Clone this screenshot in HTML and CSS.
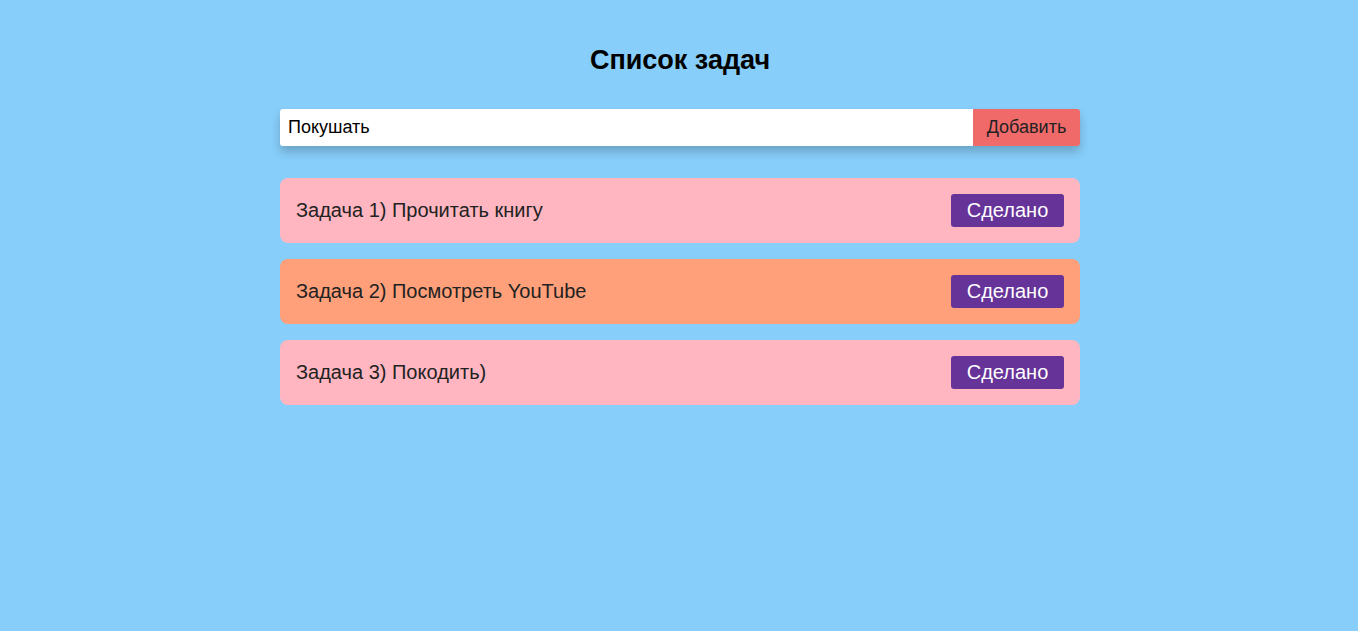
FILE: index.html
```html
<!DOCTYPE html>
<html lang="ru">
<head>
<meta charset="utf-8">
<title>Список задач</title>
<link rel="stylesheet" href="styles.css">
</head>
<body>
<div class="app">
  <h1 class="title">Список задач</h1>
  <form class="add-form">
    <input class="add-input" type="text" value="Покушать">
    <button class="add-btn" type="button">Добавить</button>
  </form>
  <ul class="tasks">
    <li class="task task-pink"><span class="task-text">Задача 1) Прочитать книгу</span><button class="done-btn" type="button">Сделано</button></li>
    <li class="task task-orange"><span class="task-text">Задача 2) Посмотреть YouTube</span><button class="done-btn" type="button">Сделано</button></li>
    <li class="task task-pink"><span class="task-text">Задача 3) Покодить)</span><button class="done-btn" type="button">Сделано</button></li>
  </ul>
</div>
</body>
</html>
```

FILE: styles.css
```css
html, body {
  margin: 0;
  padding: 0;
}
body {
  background: #87cefa;
  font-family: "Liberation Sans", Arial, sans-serif;
  min-height: 631px;
  padding-left: 2px;
}
.app {
  width: 800px;
  margin: 0 auto;
  padding-top: 45px;
}
.title {
  margin: 0 0 34px;
  font-size: 27px;
  line-height: 30px;
  text-align: center;
  color: #000;
}
.add-form {
  display: flex;
  height: 37px;
  border-radius: 3px;
  box-shadow: 0 6px 10px rgba(0, 0, 0, 0.2);
  margin: 0 0 32px;
}
.add-input {
  flex: 1;
  border: none;
  outline: none;
  margin: 0;
  padding: 0 8px;
  font-family: "Liberation Sans", Arial, sans-serif;
  font-size: 18px;
  color: #000;
  background: #fff;
  border-radius: 3px 0 0 3px;
}
.add-btn {
  width: 107px;
  border: none;
  margin: 0;
  padding: 0;
  background: #f06a6a;
  color: #222;
  font-family: "Liberation Sans", Arial, sans-serif;
  font-size: 18px;
  border-radius: 0 3px 3px 0;
}
.tasks {
  list-style: none;
  margin: 0;
  padding: 0;
  display: flex;
  flex-direction: column;
  gap: 16px;
}
.task {
  display: flex;
  align-items: center;
  justify-content: space-between;
  height: 65px;
  padding: 0 16px;
  border-radius: 8px;
  box-sizing: border-box;
}
.task-pink {
  background: #ffb6c1;
}
.task-orange {
  background: #ffa07a;
}
.task-text {
  font-size: 20px;
  color: #222;
}
.done-btn {
  width: 113px;
  height: 33px;
  border: none;
  border-radius: 3px;
  background: #663399;
  color: #fff;
  font-family: "Liberation Sans", Arial, sans-serif;
  font-size: 20px;
  padding: 0;
}
```
